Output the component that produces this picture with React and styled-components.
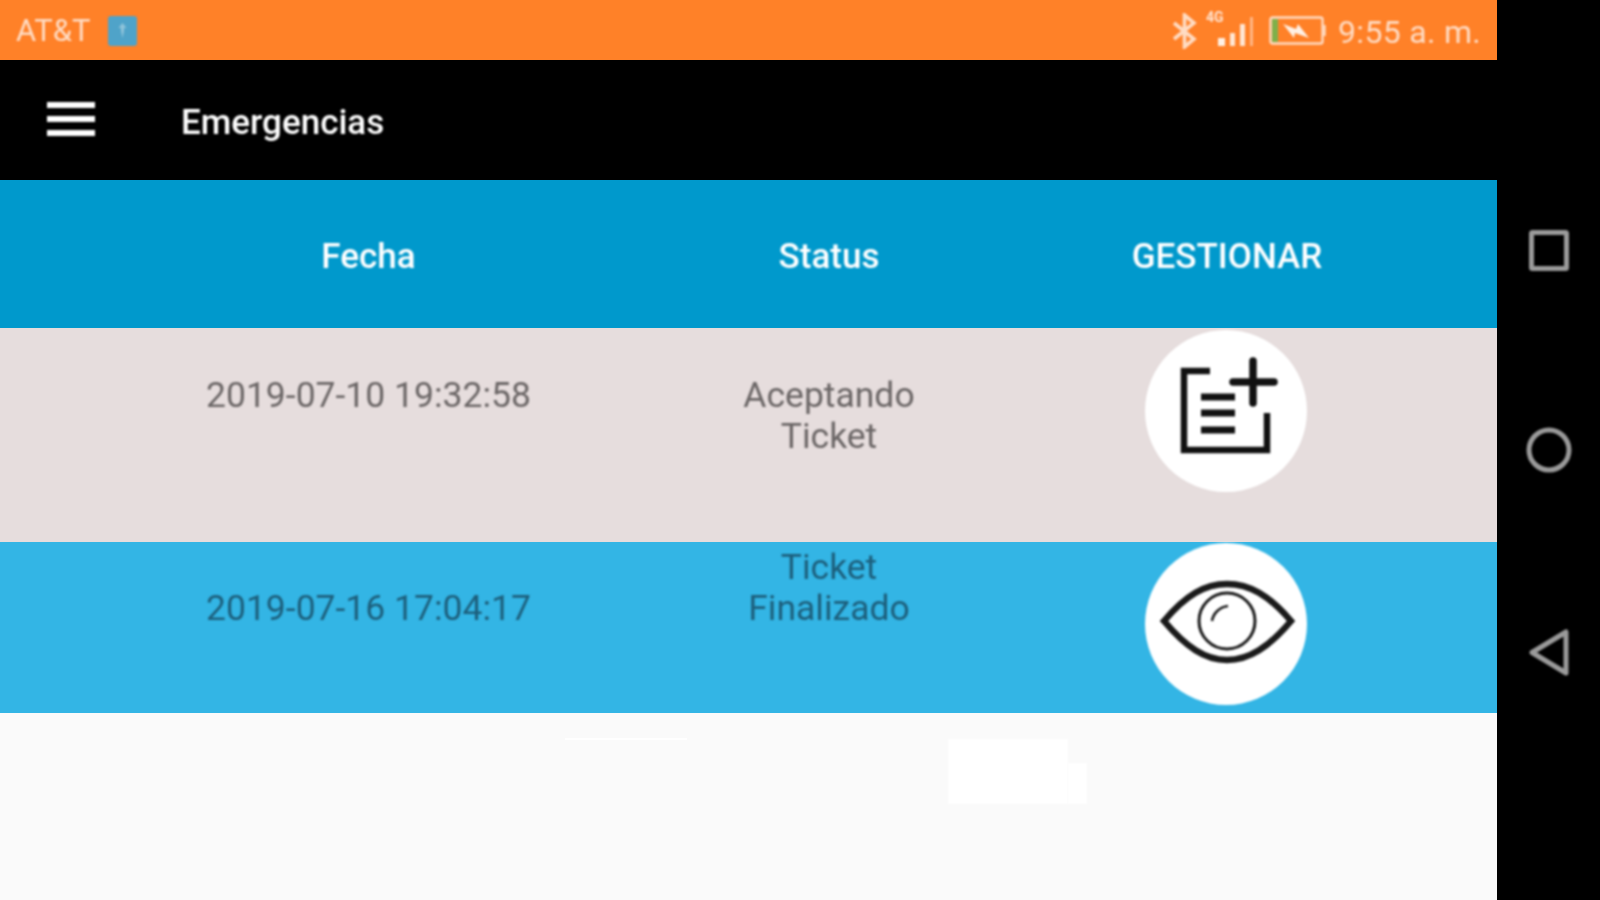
import React from "react"
import styled, { createGlobalStyle } from "styled-components"

const GlobalStyle = createGlobalStyle`
  html, body {
    margin: 0;
    height: 100%;
    background: #000;
  }
  #root {
    height: 100%;
  }
`

const Device = styled.div`
  display: flex;
  width: 1600px;
  height: 900px;
  overflow: hidden;
  background: #000;
  font-family: Roboto, "Liberation Sans", sans-serif;
`

const Screen = styled.div`
  display: flex;
  flex-direction: column;
  width: 1497px;
  height: 900px;
`

const StatusBar = styled.div`
  display: flex;
  align-items: center;
  height: 60px;
  padding: 1px 16px 0 16px;
  box-sizing: border-box;
  background: #ff8128;
  color: #ffdcc4;
  font-size: 32px;
  & > * {
    filter: blur(0.8px);
  }
`

const Carrier = styled.span`
  font-size: 31px;
  margin-right: 17px;
`

const StatusRight = styled.div`
  display: flex;
  align-items: center;
  margin-left: auto;
`

const SignalBox = styled.div`
  position: relative;
  width: 48px;
  height: 36px;
  margin-left: 9px;
`

const NetworkLabel = styled.span`
  position: absolute;
  left: 0;
  top: -4px;
  color: #ffe3d0;
  font-size: 14px;
  font-weight: 700;
  line-height: 16px;
`

const Clock = styled.span`
  margin-left: 11px;
  padding-top: 2px;
  letter-spacing: 0.3px;
`

const Toolbar = styled.div`
  display: flex;
  align-items: center;
  gap: 86px;
  height: 120px;
  padding: 0 0 0 47px;
  box-sizing: border-box;
  background: #000;
  & > * {
    filter: blur(0.8px);
  }
`

const Title = styled.h1`
  margin: 4px 0 0;
  color: #fff;
  font-size: 35px;
  font-weight: 500;
`

const Row = styled.div`
  display: grid;
  grid-template-columns: 737px 184px 576px;
  height: ${(p) => p.$height}px;
  box-sizing: border-box;
  background: ${(p) => p.$bg};
  color: ${(p) => p.$color};
  font-size: 35.5px;
  line-height: 41px;
  text-align: center;
  & > * {
    filter: blur(0.8px);
  }
`

const HeaderCell = styled.div`
  padding-top: 56px;
  padding-left: ${(p) => p.$indent || 0}px;
  color: #fff;
  font-size: 35px;
  font-weight: 500;
  white-space: nowrap;
`

const Cell = styled.div`
  display: flex;
  flex-direction: column;
  align-items: center;
  padding-top: ${(p) => p.$top}px;
  white-space: nowrap;
`

const ActionCell = styled.div`
  display: flex;
  justify-content: center;
  padding-top: ${(p) => p.$top}px;
  padding-left: 34px;
`

const ActionButton = styled.div`
  display: flex;
  width: 162px;
  height: 162px;
  border-radius: 50%;
  background: #fff;
`

const Rest = styled.div`
  position: relative;
  flex: 1;
  background: #fafafa;
`

const FaintLine = styled.div`
  position: absolute;
  left: 565px;
  top: 25px;
  width: 122px;
  height: 2px;
  background: #fff;
`

const Patch = styled.div`
  position: absolute;
  left: ${(p) => p.$left}px;
  top: ${(p) => p.$top}px;
  width: ${(p) => p.$width}px;
  height: ${(p) => p.$height}px;
  background: #fff;
  filter: blur(1px);
`

const NavBar = styled.div`
  display: flex;
  flex-direction: column;
  align-items: center;
  gap: 156px;
  flex: 1;
  padding-top: 230px;
  box-sizing: border-box;
  & > * {
    filter: blur(0.8px);
  }
`

const NetworkIcon = () => (
  <svg width="29" height="30" viewBox="0 0 29 30">
    <rect width="29" height="30" rx="3" fill="#4fa3c9" />
    <path d="M14.500 7l4 5h-2.500v3l-1.500 7-1.500-7v-3h-2.500z" fill="#8fc4da" />
  </svg>
)

const BluetoothIcon = () => (
  <svg width="25" height="36" viewBox="0 0 25 36" fill="none" stroke="#ffdcc4" strokeWidth="3.6">
    <path d="M2 10l20 16-9.500 8V2l9.500 8L2 26" />
  </svg>
)

const SignalBars = () => (
  <svg width="48" height="36" viewBox="0 0 48 36">
    <rect x="12" y="25" width="7" height="8" fill="#fff1e6" />
    <rect x="24" y="20" width="5" height="13" fill="#ffe6d4" />
    <rect x="34" y="11" width="5" height="22" fill="#ffe6d4" />
    <rect x="44" y="4" width="3" height="29" fill="#ffb585" />
  </svg>
)

const BatteryIcon = () => (
  <svg width="58" height="29" viewBox="0 0 58 29" fill="none" style={{ marginLeft: 15 }}>
    <rect x="1.500" y="1.500" width="52" height="26" rx="2" stroke="#ffdcc4" strokeWidth="2.400" />
    <rect x="3" y="3" width="6" height="23" fill="#7fb04a" />
    <path d="M55.500 9v11" stroke="#ffdcc4" strokeWidth="2.400" />
    <path d="M14 8l13 5 2-5 11 14-14-5-1 5z" fill="#fff1e6" />
  </svg>
)

const MenuIcon = () => (
  <svg width="48" height="36" viewBox="0 0 48 36" stroke="#fff" strokeWidth="6">
    <path d="M0 3h48M0 17h48M0 31h48" />
  </svg>
)

const AddTicketIcon = () => (
  <svg width="162" height="162" viewBox="0 0 162 162" fill="none" stroke="#111" strokeWidth="6.500">
    <path d="M65 41H39v79h83V83" />
    <path d="M56 67h34M56 83h34M56 100h34" strokeWidth="7" />
    <path d="M108 31v42M88 52h41" strokeWidth="7.500" strokeLinecap="round" />
  </svg>
)

const EyeIcon = () => (
  <svg width="162" height="162" viewBox="0 0 162 162" fill="none" stroke="#1a1a1a" strokeWidth="6.500">
    <path d="M19 78C41 52 60 41 82 41s42 11 64 37c-22 26-42 39-64 39S41 104 19 78z" />
    <circle cx="82" cy="78" r="28" strokeWidth="3" />
    <path d="M67 78c1-7 7-14 16-15" strokeWidth="2.500" />
  </svg>
)

const SquareIcon = () => (
  <svg width="40" height="41" viewBox="0 0 40 41" fill="none" stroke="#9a9a9a" strokeWidth="5">
    <rect x="2.500" y="2.500" width="35" height="36" rx="1" />
  </svg>
)

const CircleIcon = () => (
  <svg width="46" height="46" viewBox="0 0 46 46" fill="none" stroke="#9a9a9a" strokeWidth="5">
    <circle cx="23" cy="23" r="20" />
  </svg>
)

const BackIcon = () => (
  <svg width="42" height="47" viewBox="0 0 42 47" fill="none" stroke="#9a9a9a" strokeWidth="5" strokeLinejoin="round">
    <path d="M38 3v41L4 23.500z" />
  </svg>
)

export default function App() {
  return (
    <>
      <GlobalStyle />
      <Device>
        <Screen>
          <StatusBar>
            <Carrier>AT&amp;T</Carrier>
            <NetworkIcon />
            <StatusRight>
              <BluetoothIcon />
              <SignalBox>
                <NetworkLabel>4G</NetworkLabel>
                <SignalBars />
              </SignalBox>
              <BatteryIcon />
              <Clock>9:55 a. m.</Clock>
            </StatusRight>
          </StatusBar>
          <Toolbar>
            <MenuIcon />
            <Title>Emergencias</Title>
          </Toolbar>
          <Row $height={148} $bg="#0099cc" $color="#fff">
            <HeaderCell>Fecha</HeaderCell>
            <HeaderCell>Status</HeaderCell>
            <HeaderCell $indent={36}>GESTIONAR</HeaderCell>
          </Row>
          <Row $height={214} $bg="#e6dddd" $color="#6b6666">
            <Cell $top={47}>2019-07-10 19:32:58</Cell>
            <Cell $top={47}>
              <span>Aceptando</span>
              <span>Ticket</span>
            </Cell>
            <ActionCell $top={2}>
              <ActionButton>
                <AddTicketIcon />
              </ActionButton>
            </ActionCell>
          </Row>
          <Row $height={171} $bg="#33b5e5" $color="#1d5f7c">
            <Cell $top={46}>2019-07-16 17:04:17</Cell>
            <Cell $top={5}>
              <span>Ticket</span>
              <span>Finalizado</span>
            </Cell>
            <ActionCell $top={1}>
              <ActionButton>
                <EyeIcon />
              </ActionButton>
            </ActionCell>
          </Row>
          <Rest>
            <FaintLine />
            <Patch $left={948} $top={26} $width={120} $height={65} />
            <Patch $left={1068} $top={50} $width={19} $height={41} />
          </Rest>
        </Screen>
        <NavBar>
          <SquareIcon />
          <CircleIcon />
          <BackIcon />
        </NavBar>
      </Device>
    </>
  )
}
